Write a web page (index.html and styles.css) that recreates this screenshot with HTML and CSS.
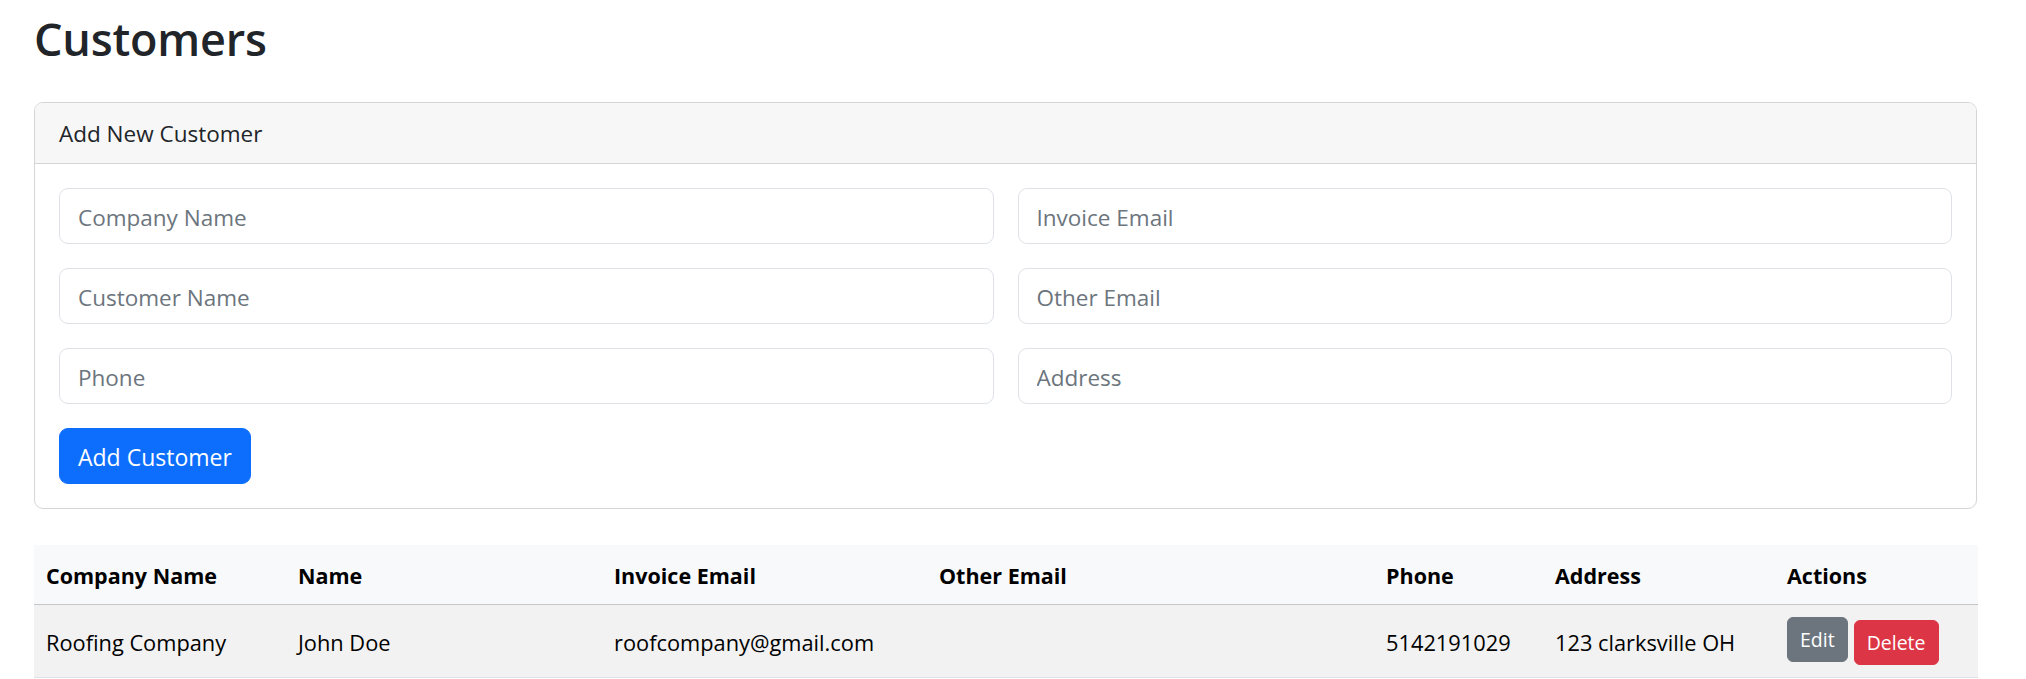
FILE: index.html
```html
<!DOCTYPE html>
<html lang="en">
<head>
    <meta charset="UTF-8">
    <meta name="viewport" content="width=device-width, initial-scale=1.0">
    <title>Customers</title>
    <link rel="stylesheet" href="styles.css">
</head>
<body>
    <div class="page">
        <h1 class="title">Customers</h1>

        <div class="card">
            <div class="card-header">Add New Customer</div>
            <div class="card-body">
                <form class="form-grid">
                    <input type="text" class="form-control" placeholder="Company Name">
                    <input type="email" class="form-control" placeholder="Invoice Email">
                    <input type="text" class="form-control" placeholder="Customer Name">
                    <input type="email" class="form-control" placeholder="Other Email">
                    <input type="text" class="form-control" placeholder="Phone">
                    <input type="text" class="form-control" placeholder="Address">
                </form>
                <button class="btn btn-primary">Add Customer</button>
            </div>
        </div>

        <table class="table">
            <colgroup>
                <col class="col-company">
                <col class="col-name">
                <col class="col-invoice">
                <col class="col-other">
                <col class="col-phone">
                <col class="col-address">
                <col class="col-actions">
            </colgroup>
            <thead>
                <tr>
                    <th>Company Name</th>
                    <th>Name</th>
                    <th>Invoice Email</th>
                    <th>Other Email</th>
                    <th>Phone</th>
                    <th>Address</th>
                    <th>Actions</th>
                </tr>
            </thead>
            <tbody>
                <tr>
                    <td>Roofing Company</td>
                    <td>John Doe</td>
                    <td>roofcompany@gmail.com</td>
                    <td></td>
                    <td>5142191029</td>
                    <td>123 clarksville OH</td>
                    <td class="cell-actions">
                        <div class="actions">
                            <a href="#" class="btn btn-sm btn-secondary">Edit</a>
                            <button class="btn btn-sm btn-danger">Delete</button>
                        </div>
                    </td>
                </tr>
            </tbody>
        </table>
    </div>
</body>
</html>
```

FILE: styles.css
```css
body {
    font-family: "Open Sans", "Noto Sans", Arial, sans-serif;
    font-size: 22.5px;
    line-height: 36px;
    color: #212529;
    background-color: #fff;
    margin: 0;
    padding: 0;
}

.page {
    padding: 10px 49px 0 34px;
}

.title {
    font-size: 45px;
    font-weight: 600;
    line-height: 58px;
    margin: 0 0 34px 0;
    letter-spacing: -0.2px;
}

.card {
    border: 1px solid #d5d5d5;
    border-radius: 9px;
    margin-bottom: 36px;
    overflow: hidden;
}

.card-header {
    background-color: #f7f7f7;
    border-bottom: 1px solid #d5d5d5;
    padding: 13px 24px 11px 24px;
}

.card-body {
    padding: 24px;
}

.form-grid {
    display: grid;
    grid-template-columns: 1fr 1fr;
    column-gap: 24px;
    row-gap: 24px;
    margin: 0 0 24px 0;
}

.form-control {
    font-family: inherit;
    font-size: 22.5px;
    line-height: 36px;
    color: #212529;
    padding: 10px 18px 8px 18px;
    border: 1px solid #dee2e6;
    border-radius: 9px;
    background-color: #fff;
    height: 56px;
    box-sizing: border-box;
    width: 100%;
    outline: none;
}

.form-control::placeholder {
    color: #6c757d;
}

.btn {
    display: inline-block;
    font-family: inherit;
    font-size: 23px;
    line-height: 36px;
    padding: 9px 18px;
    border: 1px solid transparent;
    border-radius: 9px;
    color: #fff;
    text-decoration: none;
    cursor: pointer;
}

.btn-primary {
    background-color: #0d6efd;
    border-color: #0d6efd;
    height: 56px;
    padding-top: 10px;
}

.btn-sm {
    font-size: 19.5px;
    line-height: 31px;
    padding: 6px 12px;
    border-radius: 6px;
}

.btn-secondary {
    background-color: #6c757d;
    border-color: #6c757d;
}

.btn-danger {
    background-color: #dc3545;
    border-color: #dc3545;
    margin-top: 3px;
}

.actions {
    display: flex;
    align-items: flex-start;
    gap: 6px;
}

.table {
    width: 100%;
    border-collapse: collapse;
    table-layout: fixed;
    color: #000;
}

.col-company { width: 252px; }
.col-name { width: 316px; }
.col-invoice { width: 325px; }
.col-other { width: 447px; }
.col-phone { width: 169px; }
.col-address { width: 232px; }
.col-actions { width: 203px; }

.table th {
    text-align: left;
    font-size: 21.5px;
    font-weight: 700;
    line-height: 35px;
    padding: 13px 12px 11px 12px;
    background-color: #f8f9fa;
    border-bottom: 1px solid #c6c7c8;
}

.table td {
    font-size: 21.8px;
    padding: 20px 12px 12px 12px;
    vertical-align: top;
    background-color: #f2f2f2;
    border-bottom: 1px solid #dee2e6;
    white-space: nowrap;
}

.table td.cell-actions {
    padding-top: 12px;
}
```
